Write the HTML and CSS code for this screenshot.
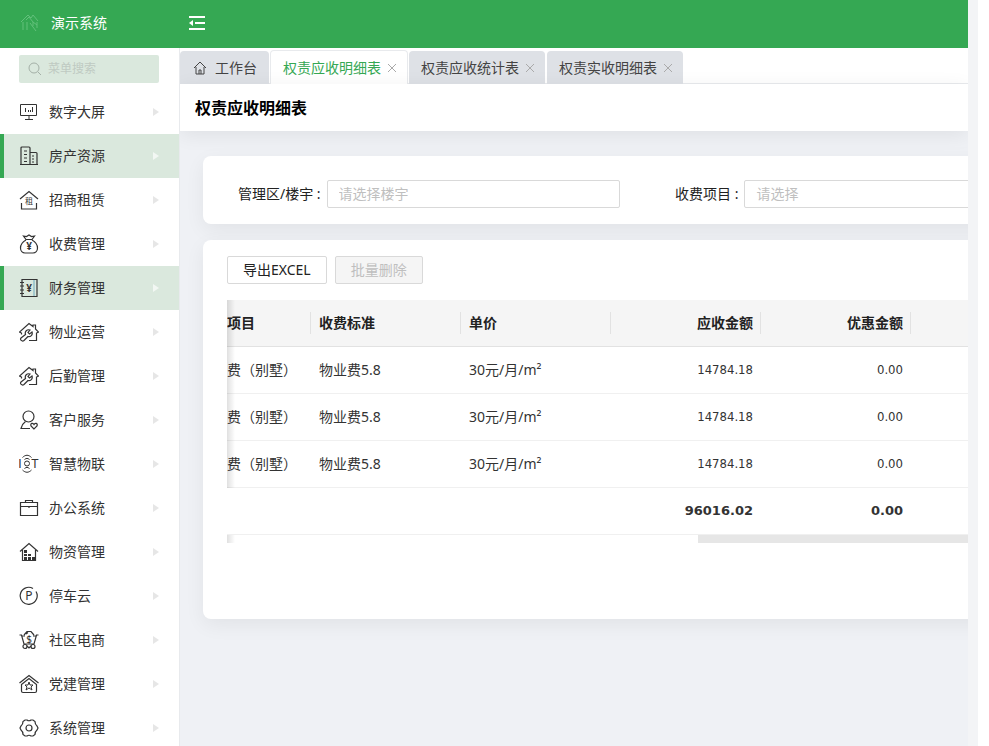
FILE: index.html
```html
<!DOCTYPE html>
<html lang="zh-CN">
<head>
  <meta charset="UTF-8">
  <meta name="viewport" content="width=device-width, initial-scale=1.0">

  <title>权责应收明细表</title>

  <link rel="stylesheet" href="styles.css">
</head>
<body>
  <div class="app">
    <header class="header">
      <div class="header__brand">
        <svg class="header__logo" viewBox="0 0 20 20"><path d="M1 9l7-7 3 3 2-3 5 6M3 9v8M6 7l3-3 4 5v4M7 9v8M10 10l6 8M17 9v6M13 9l4 3"/></svg>
        <span>演示系统</span>
      </div>
      <button type="button" class="header__toggle" aria-label="收起菜单">
        <svg viewBox="0 0 18 16"><path d="M1 2h16M7 8h10M1 14h16"/><path class="fill" d="M1 8l4-3v6z"/></svg>
      </button>
    </header>

    <div class="layout">
      <aside class="sidebar">
        <label class="search">
          <svg class="search__icon" viewBox="0 0 14 14"><circle cx="6" cy="6" r="5"/><path d="M10 10l3 3"/></svg>
          <input type="text" class="search__field" placeholder="菜单搜索" aria-label="菜单搜索">
        </label>
        <nav class="menu">
          <a href="#" class="menu__item">
            <svg class="menu__icon menu__icon--thin" viewBox="0 0 20 20"><path d="M1.500 2.500h16v11h-16zM10 14v3M6 17.500h8M6.500 6v4M9.500 8v2M11.500 8v2M13.500 5v5"/></svg>
            <span>数字大屏</span>
          </a>
          <a href="#" class="menu__item menu__item--active">
            <svg class="menu__icon" viewBox="0 0 20 20"><path d="M2 18.500V2q0-1 1-1h7q1 0 1 1v16.500M11 6.500h6q1 0 1 1v11M1 18.500h18M5 5h3M5 8.500h3M5 12h3M5 15.500h3M13 10h2M13 13h2M13 16h2"/></svg>
            <span>房产资源</span>
          </a>
          <a href="#" class="menu__item">
            <svg class="menu__icon" viewBox="0 0 20 20"><path d="M1 9l9-7.500L19 9M2.500 13v6h15v-6"/><text x="10" y="14" font-size="8">租</text></svg>
            <span>招商租赁</span>
          </a>
          <a href="#" class="menu__item">
            <svg class="menu__icon" viewBox="0 0 20 20"><path d="M7 5.500L4.500 2l3 .5L10 1l2.500 1.500 3-.5L13 5.500zM7 6C3.500 8 1.500 11 1.500 14c0 3 2 5 4.500 5h8c2.500 0 4.500-2 4.500-5 0-3-2-6-5.500-8"/><text x="10" y="16" font-size="10" font-weight="bold">¥</text></svg>
            <span>收费管理</span>
          </a>
          <a href="#" class="menu__item menu__item--active">
            <svg class="menu__icon" viewBox="0 0 20 20"><path d="M3 1.500h15v17H3zM1 4.500h4M1 8h4M1 12h4M1 15.500h4"/><path stroke="#7fb4c4" d="M15 2v16"/><text x="10" y="14" font-size="10" font-weight="bold">¥</text></svg>
            <span>财务管理</span>
          </a>
          <a href="#" class="menu__item">
            <svg class="menu__icon" viewBox="0 0 20 20"><path d="M2.500 12.500V11L.5 10 10 1.500l4 3V3h2.500v4l3 3-2 1v7.500H10M2 16l4.500-3.500C5.500 9.500 8 7 11 8l-2 2.500 1.500 1.500L13 10c1 3-1.500 5-4 4.500L5 18.500c-2 1.500-4.500-1-3-2.500z"/></svg>
            <span>物业运营</span>
          </a>
          <a href="#" class="menu__item">
            <svg class="menu__icon" viewBox="0 0 20 20"><path d="M2.500 12.500V11L.5 10 10 1.500l4 3V3h2.500v4l3 3-2 1v7.500H10M2 16l4.500-3.500C5.500 9.500 8 7 11 8l-2 2.500 1.500 1.500L13 10c1 3-1.500 5-4 4.500L5 18.500c-2 1.500-4.500-1-3-2.500z"/></svg>
            <span>后勤管理</span>
          </a>
          <a href="#" class="menu__item">
            <svg class="menu__icon" viewBox="0 0 20 20"><circle cx="9.500" cy="6.500" r="5.500"/><path d="M6.500 11.500Q3 14 2 18.500h9M15 19l-3-3c-1-3 2-3.500 3-1.500 1-2 4-1.500 3 1.500z"/></svg>
            <span>客户服务</span>
          </a>
          <a href="#" class="menu__item">
            <svg class="menu__icon menu__icon--thin" viewBox="0 0 20 20"><path d="M3.500 3.500c3-3 6-3 9 0M5.500 5.500c2-1.500 3-1.500 5 0M3.500 16c3 3 6 3 9 0M5.500 14.500c2-1.500 3-1.500 5 0"/><circle cx="8" cy="9.500" r="2.500"/><text class="iot" x="1" y="14" font-size="12">I</text><text class="iot" x="16" y="14" font-size="12">T</text></svg>
            <span>智慧物联</span>
          </a>
          <a href="#" class="menu__item">
            <svg class="menu__icon" viewBox="0 0 20 20"><path d="M1.500 4.500h17v13h-17zM6.500 4.500v-2h7v2M2 8.500h16M10 8v2"/></svg>
            <span>办公系统</span>
          </a>
          <a href="#" class="menu__item">
            <svg class="menu__icon" viewBox="0 0 20 20"><path d="M1 9.500l9-8 9 8M3.500 8v10.500h13V8"/><path class="fill" d="M5 8h3v3H5zM5 12h3v2H5zM9 12h3v2H9zM5 15h3v3H5zM9 15h3v3H9zM13 15h3v3h-3z"/></svg>
            <span>物资管理</span>
          </a>
          <a href="#" class="menu__item">
            <svg class="menu__icon" viewBox="0 0 20 20"><path d="M14 2.500a8.500 8.500 0 1 0 3 3"/><text x="10" y="14" font-size="12">P</text></svg>
            <span>停车云</span>
          </a>
          <a href="#" class="menu__item">
            <svg class="menu__icon" viewBox="0 0 20 20"><path d="M.5 5h2L5 14h10l2.500-9h2M3 6h3M14 6h3M5 5l3-3.500h4L15 5M7 4l2-1.500"/><circle cx="6" cy="16.500" r="2"/><circle cx="14" cy="16.500" r="2"/><path d="M8 16l2 2 2-2"/><text x="10" y="13" font-size="10">$</text></svg>
            <span>社区电商</span>
          </a>
          <a href="#" class="menu__item">
            <svg class="menu__icon" viewBox="0 0 20 20"><path d="M.5 9L10 1.500 19.500 9M2.500 10.500L10 4.500l7.500 6v6.500q0 1.500-1.500 1.500H4q-1.500 0-1.500-1.500z"/><path stroke-width="1" d="M10 8l1 3h3l-2 2 1 3-3-2-3 2 1-3-2-2h3z"/></svg>
            <span>党建管理</span>
          </a>
          <a href="#" class="menu__item">
            <svg class="menu__icon" viewBox="0 0 20 20"><path d="M6 2h2q2 1.500 4 0h2l2 1.500q0 3 2 4.500l1 2-1 2q-2 1.500-2 4.500L14 18h-2q-2-1.500-4 0H6l-2-1.500Q4 13.500 2 12l-1-2 1-2q2-1.500 2-4.500z"/><circle cx="10" cy="10" r="3"/></svg>
            <span>系统管理</span>
          </a>
        </nav>
      </aside>

      <main class="main">
        <div class="tabs">
          <div class="tab tab--home">
            <svg class="tab__home" viewBox="0 0 14 14"><path d="M1 7l6-6 6 6M3 6v7h8V6M6 13V9h2v4"/></svg>
            <a href="#" class="tab__link">工作台</a>
          </div>
          <div class="tab tab--active">
            <a href="#" class="tab__link">权责应收明细表</a>
            <button type="button" class="tab__close" aria-label="关闭"><svg viewBox="0 0 10 10"><path d="M1 1l8 8M9 1l-8 8"/></svg></button>
          </div>
          <div class="tab">
            <a href="#" class="tab__link">权责应收统计表</a>
            <button type="button" class="tab__close" aria-label="关闭"><svg viewBox="0 0 10 10"><path d="M1 1l8 8M9 1l-8 8"/></svg></button>
          </div>
          <div class="tab">
            <a href="#" class="tab__link">权责实收明细表</a>
            <button type="button" class="tab__close" aria-label="关闭"><svg viewBox="0 0 10 10"><path d="M1 1l8 8M9 1l-8 8"/></svg></button>
          </div>
        </div>
        <h1 class="title">权责应收明细表</h1>

        <div class="content">
          <form class="card filter">
            <div class="filter__item">
              <label class="filter__label" for="building">管理区/楼宇 :</label>
              <input type="text" class="filter__field" id="building" placeholder="请选择楼宇">
            </div>
            <div class="filter__item">
              <label class="filter__label" for="charge">收费项目 :</label>
              <input type="text" class="filter__field" id="charge" placeholder="请选择">
            </div>
          </form>

          <section class="card report">
            <div class="report__tool">
              <button type="button" class="btn">导出EXCEL</button>
              <button type="button" class="btn" disabled>批量删除</button>
            </div>
            <div class="report__scroll">
              <table class="table">
                <colgroup>
                  <col class="table__name">
                  <col class="table__col">
                  <col class="table__col">
                  <col class="table__col">
                  <col class="table__col">
                  <col>
                </colgroup>
                <thead>
                  <tr><th>收费项目</th><th>收费标准</th><th>单价</th><th class="num">应收金额</th><th class="num">优惠金额</th><th></th></tr>
                </thead>
                <tbody>
                  <tr><td>物业费（别墅）</td><td>物业费5.8</td><td>30元/月/m²</td><td class="num">14784.18</td><td class="num">0.00</td><td></td></tr>
                  <tr><td>物业费（别墅）</td><td>物业费5.8</td><td>30元/月/m²</td><td class="num">14784.18</td><td class="num">0.00</td><td></td></tr>
                  <tr><td>物业费（别墅）</td><td>物业费5.8</td><td>30元/月/m²</td><td class="num">14784.18</td><td class="num">0.00</td><td></td></tr>
                </tbody>
                <tfoot>
                  <tr><td></td><td></td><td></td><td class="num">96016.02</td><td class="num">0.00</td><td></td></tr>
                </tfoot>
              </table>
              <div class="report__bar"><div class="report__thumb"></div></div>
            </div>
          </section>
        </div>
      </main>
    </div>
  </div>
</body>
</html>
```
FILE: styles.css
```css
* {
  box-sizing: border-box;
}

body, html {
  margin: 0;
  padding: 0;
  height: 100%;
}

body {
  padding-right: 11px;
  overflow: hidden;
  font-family: "Noto Sans", "Noto Sans CJK SC", sans-serif;
  font-size: 14px;
  line-height: 20px;
  color: #333;
  background: #fff;
}

a {
  color: inherit;
  text-decoration: none;
}

button, input {
  font: inherit;
}

svg {
  display: block;
  flex: none;
  fill: none;
  stroke: currentColor;
}

svg .fill {
  fill: currentColor;
  stroke: none;
}

svg text {
  fill: currentColor;
  stroke: none;
  text-anchor: middle;
}

svg .iot {
  font-family: "Liberation Sans", sans-serif;
}

.app {
  display: flex;
  flex-direction: column;
  height: 100%;
  border-right: 10px solid #f3f4f6;
}

.header {
  display: flex;
  align-items: center;
  flex: none;
  height: 48px;
  padding-bottom: 2px;
  color: #fff;
  background: #35a853;
}

.header__brand {
  display: flex;
  align-items: center;
  gap: 11px;
  width: 188px;
  padding-left: 20px;
}

.header__logo {
  width: 20px;
  height: 20px;
  color: #62c07b;
}

.header__toggle {
  padding: 0;
  border: 0;
  color: #fff;
  background: none;
  cursor: pointer;
}

.header__toggle svg {
  width: 18px;
  height: 16px;
  stroke-width: 2;
}

.layout {
  display: flex;
  flex: 1;
  min-height: 0;
}

.sidebar {
  flex: none;
  width: 180px;
  border-right: 1px solid #e8eaed;
  overflow: hidden;
}

.search {
  display: flex;
  align-items: center;
  gap: 6px;
  height: 28px;
  margin: 7px 20px 7px 19px;
  padding: 0 9px;
  border-radius: 2px;
  background: #dae8dd;
}

.search__icon {
  width: 14px;
  height: 14px;
  color: #a4b0a7;
}

.search__field {
  width: 100%;
  padding: 0;
  border: 0;
  outline: none;
  font-size: 12px;
  background: none;
}

.search__field::placeholder {
  color: #bfcac2;
}

.menu__item {
  display: flex;
  align-items: center;
  gap: 10px;
  height: 44px;
  padding: 0 20px 0 15px;
  border-left: 4px solid transparent;
}

.menu__item::after {
  content: "";
  margin-left: auto;
  border: solid transparent;
  border-width: 4px 0 4px 6px;
  border-left-color: #e6e6e6;
}

.menu__item--active {
  border-left-color: #35a853;
  background: #dae8dd;
}

.menu__item--active::after {
  border-left-color: #f2f7f3;
}

.menu__icon {
  width: 20px;
  height: 20px;
  stroke-width: 1.2;
}

.menu__icon--thin {
  stroke-width: 1;
}

.main {
  flex: 1;
  display: flex;
  flex-direction: column;
  min-width: 0;
  overflow: hidden;
  background: #eff1f5;
}

.tabs {
  display: flex;
  align-items: flex-end;
  flex: none;
  gap: 2px;
  height: 36px;
  border-bottom: 1px solid #e8eaed;
  background: #fff;
}

.tab {
  display: flex;
  align-items: center;
  gap: 6px;
  height: 33px;
  margin-bottom: -1px;
  padding: 0 10px 0 12px;
  border-radius: 4px 4px 0 0;
  color: #444;
  background: #dee1e6;
}

.tab--home {
  gap: 8px;
  padding: 0 12px 0 13px;
}

.tab--active {
  height: 34px;
  margin: 0 -1px -1px;
  border: 1px solid #e8eaed;
  border-bottom: 0;
  color: #35a853;
  background: #fff;
}

.tab__home {
  width: 14px;
  height: 14px;
}

.tab__close {
  padding: 0;
  border: 0;
  color: #aaa;
  background: none;
  cursor: pointer;
}

.tab__close svg {
  width: 10px;
  height: 10px;
}

.title {
  flex: none;
  margin: 0;
  padding: 12px 15px 11px;
  font-size: 16px;
  line-height: 24px;
  color: #000;
  background: #fff;
  box-shadow: 0 4px 20px rgba(0, 0, 0, .07);
}

/* wider than the window, the rest is cut off on the right */
.content {
  min-width: 1360px;
  padding: 25px 23px;
}

.card {
  padding: 24px;
  border-radius: 8px;
  background: #fff;
  box-shadow: 0 6px 20px rgba(0, 0, 0, .06);
}

.card + .card {
  margin-top: 16px;
}

.filter {
  display: flex;
  gap: 44px;
  padding-bottom: 16px;
}

.filter__item {
  display: flex;
  flex: 0 0 393px;
  align-items: center;
  gap: 6px;
  height: 28px;
}

.filter__label {
  flex: none;
  padding-left: 11px;
  color: #222;
}

.filter__field {
  flex: 1;
  min-width: 0;
  height: 28px;
  padding: 0 11px 1px;
  border: 1px solid #d9d9d9;
  border-radius: 2px;
  outline: none;
}

.filter__field::placeholder {
  color: #bfbfbf;
}

.report {
  padding: 16px 24px 76px;
}

.report__tool {
  display: flex;
  gap: 8px;
  margin-bottom: 16px;
}

.btn {
  height: 28px;
  padding: 0 15px;
  border: 1px solid #d9d9d9;
  border-radius: 2px;
  color: #222;
  background: #fff;
  cursor: pointer;
}

.btn:disabled {
  color: #bfbfbf;
  background: #f5f5f5;
}

.report__scroll {
  position: relative;
  overflow: hidden;
}

/* shade of the fixed columns */
.report__scroll::before {
  content: "";
  position: absolute;
  top: 0;
  left: 0;
  width: 8px;
  height: 188px;
  background: linear-gradient(to right, rgba(0, 0, 0, .12), rgba(0, 0, 0, 0));
}

.table {
  width: 100%;
  margin-left: -36px;
  table-layout: fixed;
  border-collapse: separate;
  border-spacing: 0;
}

.table__name {
  width: 120px;
}

.table__col {
  width: 150px;
}

.table th, .table td {
  height: 47px;
  padding: 0 8px;
  border-bottom: 1px solid #f0f0f0;
  text-align: left;
}

.table th {
  border-bottom-color: #e2e2e2;
  color: #222;
  background: linear-gradient(#e2e2e2, #e2e2e2) no-repeat right center / 1px 22px #f5f5f5;
}

.table .num {
  text-align: right;
}

.table td.num {
  font-family: "DejaVu Sans Condensed", "DejaVu Sans", sans-serif;
  font-size: 13px;
}

.table tfoot td.num {
  font-family: "DejaVu Sans", sans-serif;
  font-weight: bold;
}

.report__bar {
  height: 8px;
  padding-left: 471px;
  background: linear-gradient(to right, rgba(0, 0, 0, .12), rgba(0, 0, 0, 0) 8px);
}

.report__thumb {
  height: 100%;
  background: #e6e6e6;
}
```
